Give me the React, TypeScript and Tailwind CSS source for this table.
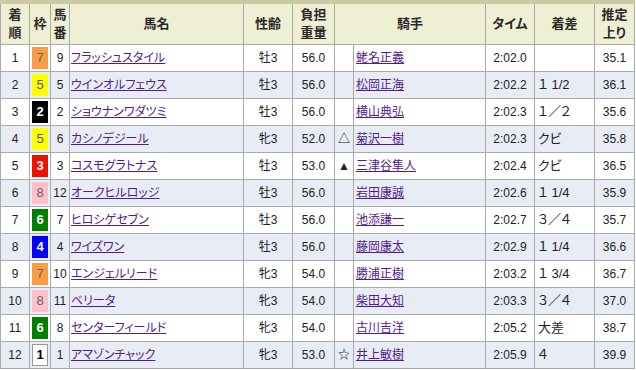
type Row = {
  rank: number;
  waku: number;
  num: number;
  horse: string;
  sex: string;
  weight: string;
  mark: string;
  jockey: string;
  time: string;
  margin: string;
  last: string;
};

const rows: Row[] = [
  { rank: 1, waku: 7, num: 9, horse: "フラッシュスタイル", sex: "牡3", weight: "56.0", mark: "", jockey: "蛯名正義", time: "2:02.0", margin: "", last: "35.1" },
  { rank: 2, waku: 5, num: 5, horse: "ウインオルフェウス", sex: "牡3", weight: "56.0", mark: "", jockey: "松岡正海", time: "2:02.2", margin: "１ 1/2", last: "36.1" },
  { rank: 3, waku: 2, num: 2, horse: "ショウナンワダツミ", sex: "牡3", weight: "56.0", mark: "", jockey: "横山典弘", time: "2:02.3", margin: "１／２", last: "35.6" },
  { rank: 4, waku: 5, num: 6, horse: "カシノデジール", sex: "牝3", weight: "52.0", mark: "△", jockey: "菊沢一樹", time: "2:02.3", margin: "クビ", last: "35.8" },
  { rank: 5, waku: 3, num: 3, horse: "コスモグラトナス", sex: "牡3", weight: "53.0", mark: "▲", jockey: "三津谷隼人", time: "2:02.4", margin: "クビ", last: "36.5" },
  { rank: 6, waku: 8, num: 12, horse: "オークヒルロッジ", sex: "牡3", weight: "56.0", mark: "", jockey: "岩田康誠", time: "2:02.6", margin: "１ 1/4", last: "35.9" },
  { rank: 7, waku: 6, num: 7, horse: "ヒロシゲセブン", sex: "牡3", weight: "56.0", mark: "", jockey: "池添謙一", time: "2:02.7", margin: "３／４", last: "35.7" },
  { rank: 8, waku: 4, num: 4, horse: "ワイズワン", sex: "牡3", weight: "56.0", mark: "", jockey: "藤岡康太", time: "2:02.9", margin: "１ 1/4", last: "36.6" },
  { rank: 9, waku: 7, num: 10, horse: "エンジェルリード", sex: "牝3", weight: "54.0", mark: "", jockey: "勝浦正樹", time: "2:03.2", margin: "１ 3/4", last: "36.7" },
  { rank: 10, waku: 8, num: 11, horse: "ベリータ", sex: "牝3", weight: "54.0", mark: "", jockey: "柴田大知", time: "2:03.3", margin: "３／４", last: "37.0" },
  { rank: 11, waku: 6, num: 8, horse: "センターフィールド", sex: "牝3", weight: "54.0", mark: "", jockey: "古川吉洋", time: "2:05.2", margin: "大差", last: "38.7" },
  { rank: 12, waku: 1, num: 1, horse: "アマゾンチャック", sex: "牝3", weight: "53.0", mark: "☆", jockey: "井上敏樹", time: "2:05.9", margin: "４", last: "39.9" },
];

// 枠の色
const wakuStyle: Record<number, string> = {
  1: "bg-white text-black border border-[#999] font-bold",
  2: "bg-black text-white font-bold",
  3: "bg-[#ee1100] text-white font-bold",
  4: "bg-[#0000ff] text-white font-bold",
  5: "bg-[#ffff00] text-[#555]",
  6: "bg-[#008000] text-white font-bold",
  7: "bg-[#fa9b45] text-[#666]",
  8: "bg-[#ffc0cb] text-[#666]",
};

const head = "bg-[#efefd3] flex items-center justify-center text-center font-bold text-[13px] leading-[18px] text-[#2a2a2a]";

export default function App() {
  return (
    <div className="w-[636px] h-[370px] bg-white font-['Liberation_Sans','Noto_Sans_CJK_JP',sans-serif] [font-feature-settings:'palt'] text-[12px] text-[#222]">
      <div className="w-[635px] border-t-4 border-[#c9c9a3]">
        <div className="grid grid-cols-[28px_20px_18px_173px_48px_41px_18px_131px_48px_59px_39px] gap-px bg-[#aaa] px-px pb-px">
          <div className={`${head} h-[40px]`}>着<br />順</div>
          <div className={head}>枠</div>
          <div className={head}>馬<br />番</div>
          <div className={head}>馬名</div>
          <div className={head}>性齢</div>
          <div className={head}>負担<br />重量</div>
          <div className={`${head} col-span-2`}>騎手</div>
          <div className={head}>タイム</div>
          <div className={head}>着差</div>
          <div className={head}>推定<br />上り</div>

          {rows.map((r, i) => {
            const bg = i % 2 === 0 ? "bg-white" : "bg-[#e8ecf5]";
            const cell = `${bg} h-[26px] flex items-center`;
            return (
              <div key={r.rank} className="contents">
                <div className={`${cell} justify-center`}>{r.rank}</div>
                <div className={`${cell} justify-center`}>
                  <span className={`w-4 h-[22px] flex items-center justify-center text-[13px] ${wakuStyle[r.waku]}`}>
                    {r.waku}
                  </span>
                </div>
                <div className={`${cell} justify-center`}>{r.num}</div>
                <div className={`${cell} pl-px`}>
                  <a href="#" className="text-[#551a8b] underline text-[12px]">{r.horse}</a>
                </div>
                <div className={`${cell} justify-center`}>{r.sex}</div>
                <div className={`${cell} justify-center`}>{r.weight}</div>
                <div className={`${cell} justify-center text-[12px]`}>{r.mark}</div>
                <div className={`${cell} pl-0.5`}>
                  <a href="#" className="text-[#551a8b] underline">{r.jockey}</a>
                </div>
                <div className={`${cell} justify-center`}>{r.time}</div>
                <div className={`${cell} pl-[3px] text-[13px]`}>{r.margin}</div>
                <div className={`${cell} justify-center`}>{r.last}</div>
              </div>
            );
          })}
        </div>
      </div>
    </div>
  );
}
